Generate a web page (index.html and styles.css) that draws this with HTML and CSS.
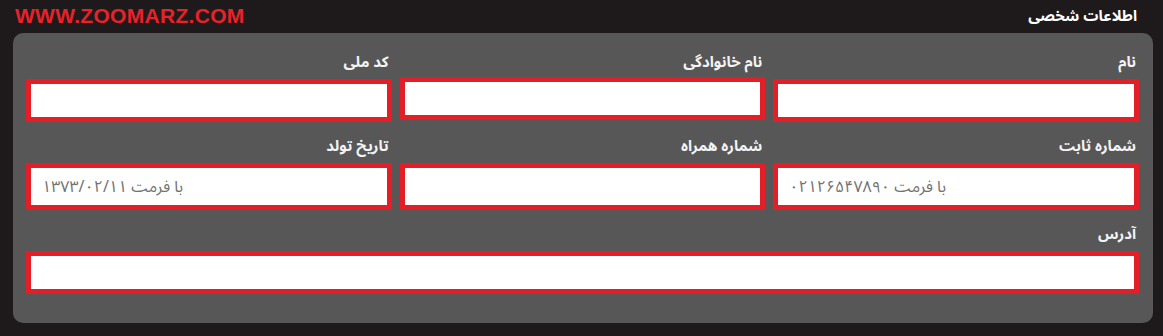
FILE: index.html
```html
<!DOCTYPE html>
<html lang="fa">
<head>
<meta charset="utf-8">
<title>اطلاعات شخصی</title>
<link rel="stylesheet" href="styles.css">
</head>
<body>
<div class="page">
  <header class="top">
    <div class="brand">WWW.ZOOMARZ.COM</div>
    <h2 class="title" dir="rtl">اطلاعات شخصی</h2>
  </header>
  <section class="panel" dir="rtl">
    <div class="field">
      <label class="label">نام</label>
      <input class="input" type="text">
    </div>
    <div class="field">
      <label class="label">نام خانوادگی</label>
      <input class="input shifted" type="text">
    </div>
    <div class="field">
      <label class="label">کد ملی</label>
      <input class="input" type="text">
    </div>
    <div class="field">
      <label class="label">شماره ثابت</label>
      <input class="input tall" type="text" placeholder="با فرمت ۰۲۱۲۶۵۴۷۸۹۰">
    </div>
    <div class="field">
      <label class="label">شماره همراه</label>
      <input class="input tall" type="text">
    </div>
    <div class="field">
      <label class="label">تاریخ تولد</label>
      <input class="input tall" type="text" placeholder="با فرمت ۱۳۷۳/۰۲/۱۱">
    </div>
    <div class="field wide">
      <label class="label">آدرس</label>
      <input class="input" type="text">
    </div>
  </section>
</div>
</body>
</html>
```

FILE: styles.css
```css
* { box-sizing: border-box; }

html, body {
  margin: 0;
  padding: 0;
  background: #1e1a1b;
}

body {
  font-family: "Noto Sans Arabic", "DejaVu Sans", sans-serif;
  width: 1163px;
  height: 336px;
  overflow: hidden;
}

.top {
  height: 33px;
  display: flex;
  align-items: center;
  justify-content: space-between;
  padding: 0 26px 0 15px;
}

.brand {
  font-family: "Liberation Sans", Arial, sans-serif;
  font-weight: bold;
  font-size: 21px;
  letter-spacing: 0.3px;
  color: #e8212a;
  line-height: 1;
  margin-top: -2px;
}

.title {
  margin: 0;
  font-size: 15px;
  font-weight: bold;
  color: #ffffff;
  line-height: 20px;
  margin-top: -1px;
}

.panel {
  margin: 0 10px 0 13px;
  background: #575757;
  border-radius: 10px;
  padding: 19px 14px 29px 13px;
  display: grid;
  grid-template-columns: repeat(3, minmax(0, 1fr));
  column-gap: 8px;
  row-gap: 14px;
}

.field {
  display: flex;
  flex-direction: column;
  min-width: 0;
}

.wide { grid-column: 1 / -1; }

.label {
  font-size: 15px;
  font-weight: bold;
  color: #f3f3f3;
  line-height: 20px;
  padding-right: 3px;
  margin-bottom: 7px;
}

.input {
  width: 100%;
  min-width: 0;
  height: 43px;
  border: 5px solid #e41e26;
  background: #ffffff;
  border-radius: 0;
  outline: none;
  padding: 0 11px;
  font-family: inherit;
  font-size: 16px;
  color: #555;
  text-align: left;
}

.input::placeholder {
  color: #727272;
  opacity: 1;
}

.tall { height: 47px; }

.shifted { margin-top: -2px; }
```
